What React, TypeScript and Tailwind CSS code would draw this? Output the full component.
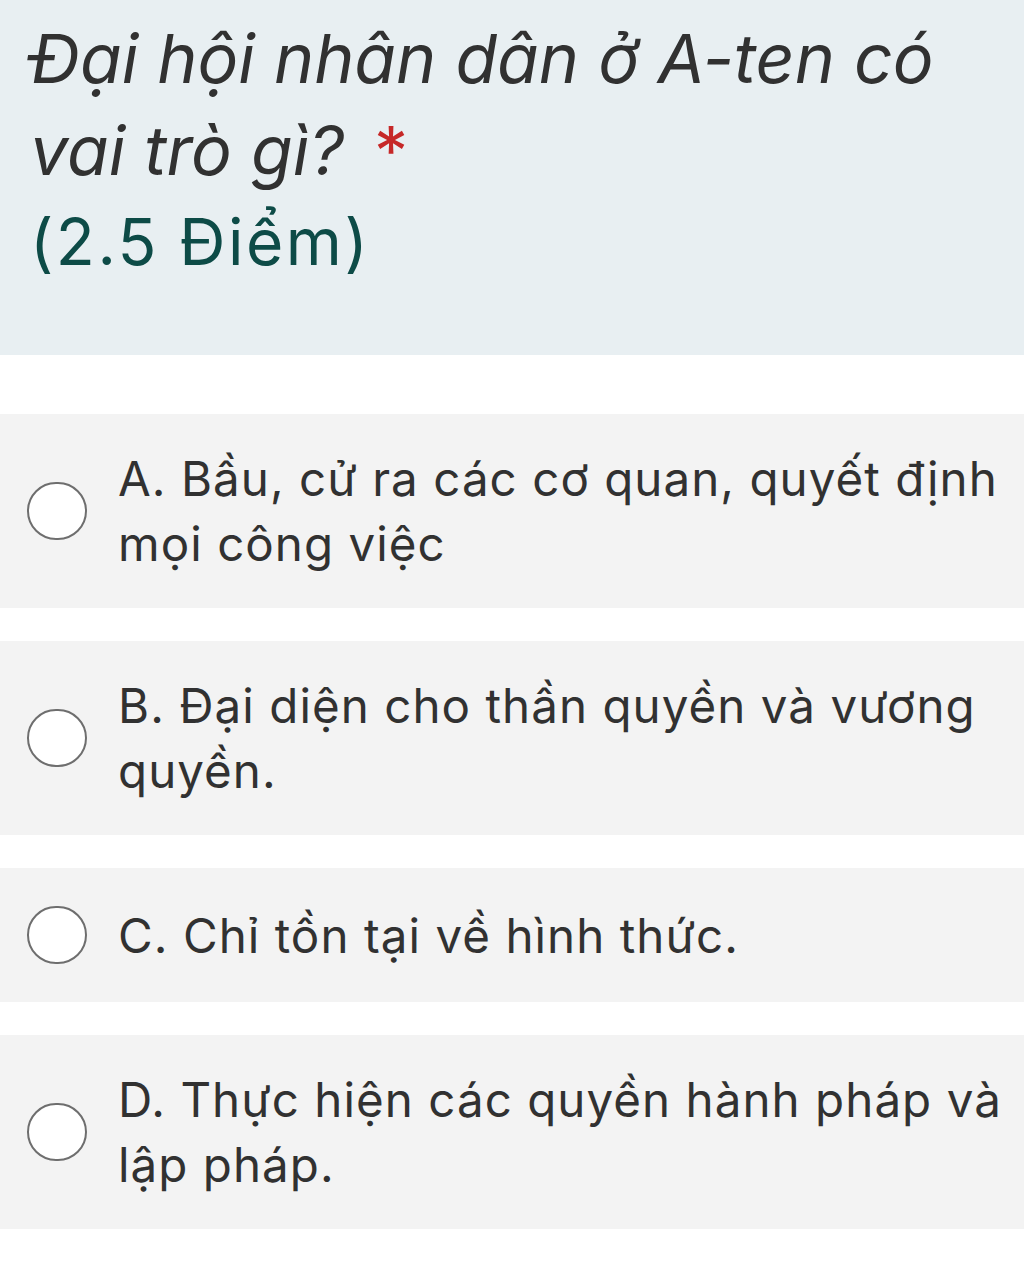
const options = [
  "A. Bầu, cử ra các cơ quan, quyết định mọi công việc",
  "B. Đại diện cho thần quyền và vương quyền.",
  "C. Chỉ tồn tại về hình thức.",
  "D. Thực hiện các quyền hành pháp và lập pháp.",
];

function Radio() {
  return (
    <div className="h-[58px] w-[60px] shrink-0 rounded-full border-[2.5px] border-[#6e6e6e] bg-white" />
  );
}

export default function App() {
  return (
    <div className="min-h-[1280px] bg-white font-['Inter',sans-serif] text-[#313131]">
      <div className="bg-[#e8eff2] pl-[30px] pr-6 pt-[12px] pb-[67px]">
        <h1 className="text-[68px] italic leading-[92px]">
          Đại hội nhân dân ở A-ten có vai trò gì?
          <span className="ml-[30px] not-italic text-[#c62828]">*</span>
        </h1>
        <div className="text-[64px] leading-[92px] tracking-[2.5px] text-[#0d4b47]">(2.5 Điểm)</div>
      </div>

      <div className="mt-[59px] flex flex-col gap-[33px]">
        {options.map((opt) => (
          <div
            key={opt}
            className="flex min-h-[134px] items-center gap-[31px] bg-[#f3f3f3] py-[32px] pl-[27px] pr-3"
          >
            <Radio />
            <div className="text-[47.5px] leading-[65px] tracking-[1.05px]">{opt}</div>
          </div>
        ))}
      </div>
    </div>
  );
}
